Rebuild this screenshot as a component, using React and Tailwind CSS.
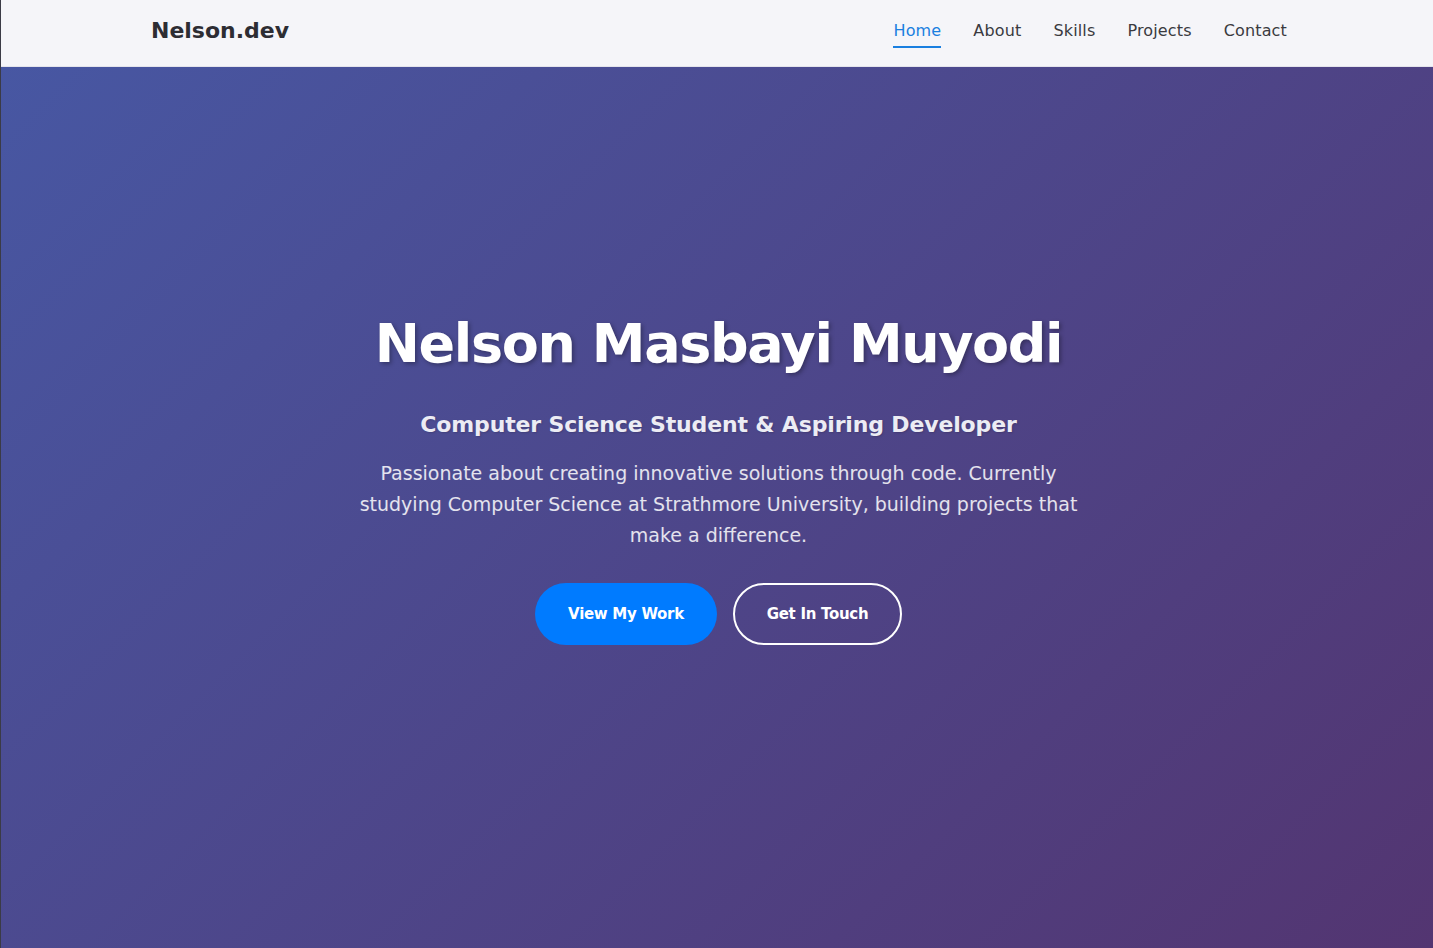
import React from 'react';

const links = ['Home', 'About', 'Skills', 'Projects', 'Contact'];

export default function App() {
  return (
    <div
      className="relative min-h-screen border-l border-[#3b3b46] text-white"
      style={{ fontFamily: '"DejaVu Sans", "Noto Sans", sans-serif' }}
    >
      {/* Header */}
      <header className="absolute top-0 left-0 right-0 z-10 h-[67px] bg-[#f5f5f9] border-b border-[#e4e4ec]">
        <div className="max-w-[1140px] mx-auto pl-[4px] pb-[6px] h-full flex items-center justify-between">
          <span className="text-[22px] font-bold text-[#2d2d33]">Nelson.dev</span>
          <ul className="flex items-center gap-8 pt-[1px] text-[16px] leading-6 tracking-[0.15px] text-[#3a3a40]">
            {links.map((l) => (
              <li key={l} className="relative">
                <span className={l === 'Home' ? 'text-[#1a7fe0]' : ''}>{l}</span>
                {l === 'Home' && (
                  <span className="absolute left-0 right-0 -bottom-[5px] h-[2px] bg-[#1a7fe0]" />
                )}
              </li>
            ))}
          </ul>
        </div>
      </header>

      {/* Hero */}
      <section className="h-[948px] pt-[8px] pl-[3px] flex items-center justify-center bg-[linear-gradient(135deg,#4758a4_0%,#533571_100%)]">
        <div className="flex flex-col items-center text-center max-w-[740px]">
          <h1 className="whitespace-nowrap text-[54px] font-bold leading-[65px] tracking-[-1.4px] [text-shadow:2px_2px_4px_rgba(0,0,0,0.3)]">
            Nelson Masbayi Muyodi
          </h1>
          <h2 className="mt-[32px] text-[22px] leading-[33px] font-bold text-[#ececf4] tracking-[-0.15px] [text-shadow:1px_1px_2px_rgba(0,0,0,0.15)]">
            Computer Science Student &amp; Aspiring Developer
          </h2>
          <p className="mt-[17px] text-[19px] leading-[31px] text-white/85">
            Passionate about creating innovative solutions through code. Currently studying Computer Science at
            Strathmore University, building projects that make a difference.
          </p>
          <div className="mt-[32px] flex gap-4">
            <button className="h-[62px] w-[182px] rounded-full bg-[#007bff] text-[15px] tracking-[-0.3px] font-bold text-white">
              View My Work
            </button>
            <button className="h-[62px] w-[169px] rounded-full border-2 border-white text-[15px] tracking-[-0.3px] font-bold text-white">
              Get In Touch
            </button>
          </div>
        </div>
      </section>
    </div>
  );
}
